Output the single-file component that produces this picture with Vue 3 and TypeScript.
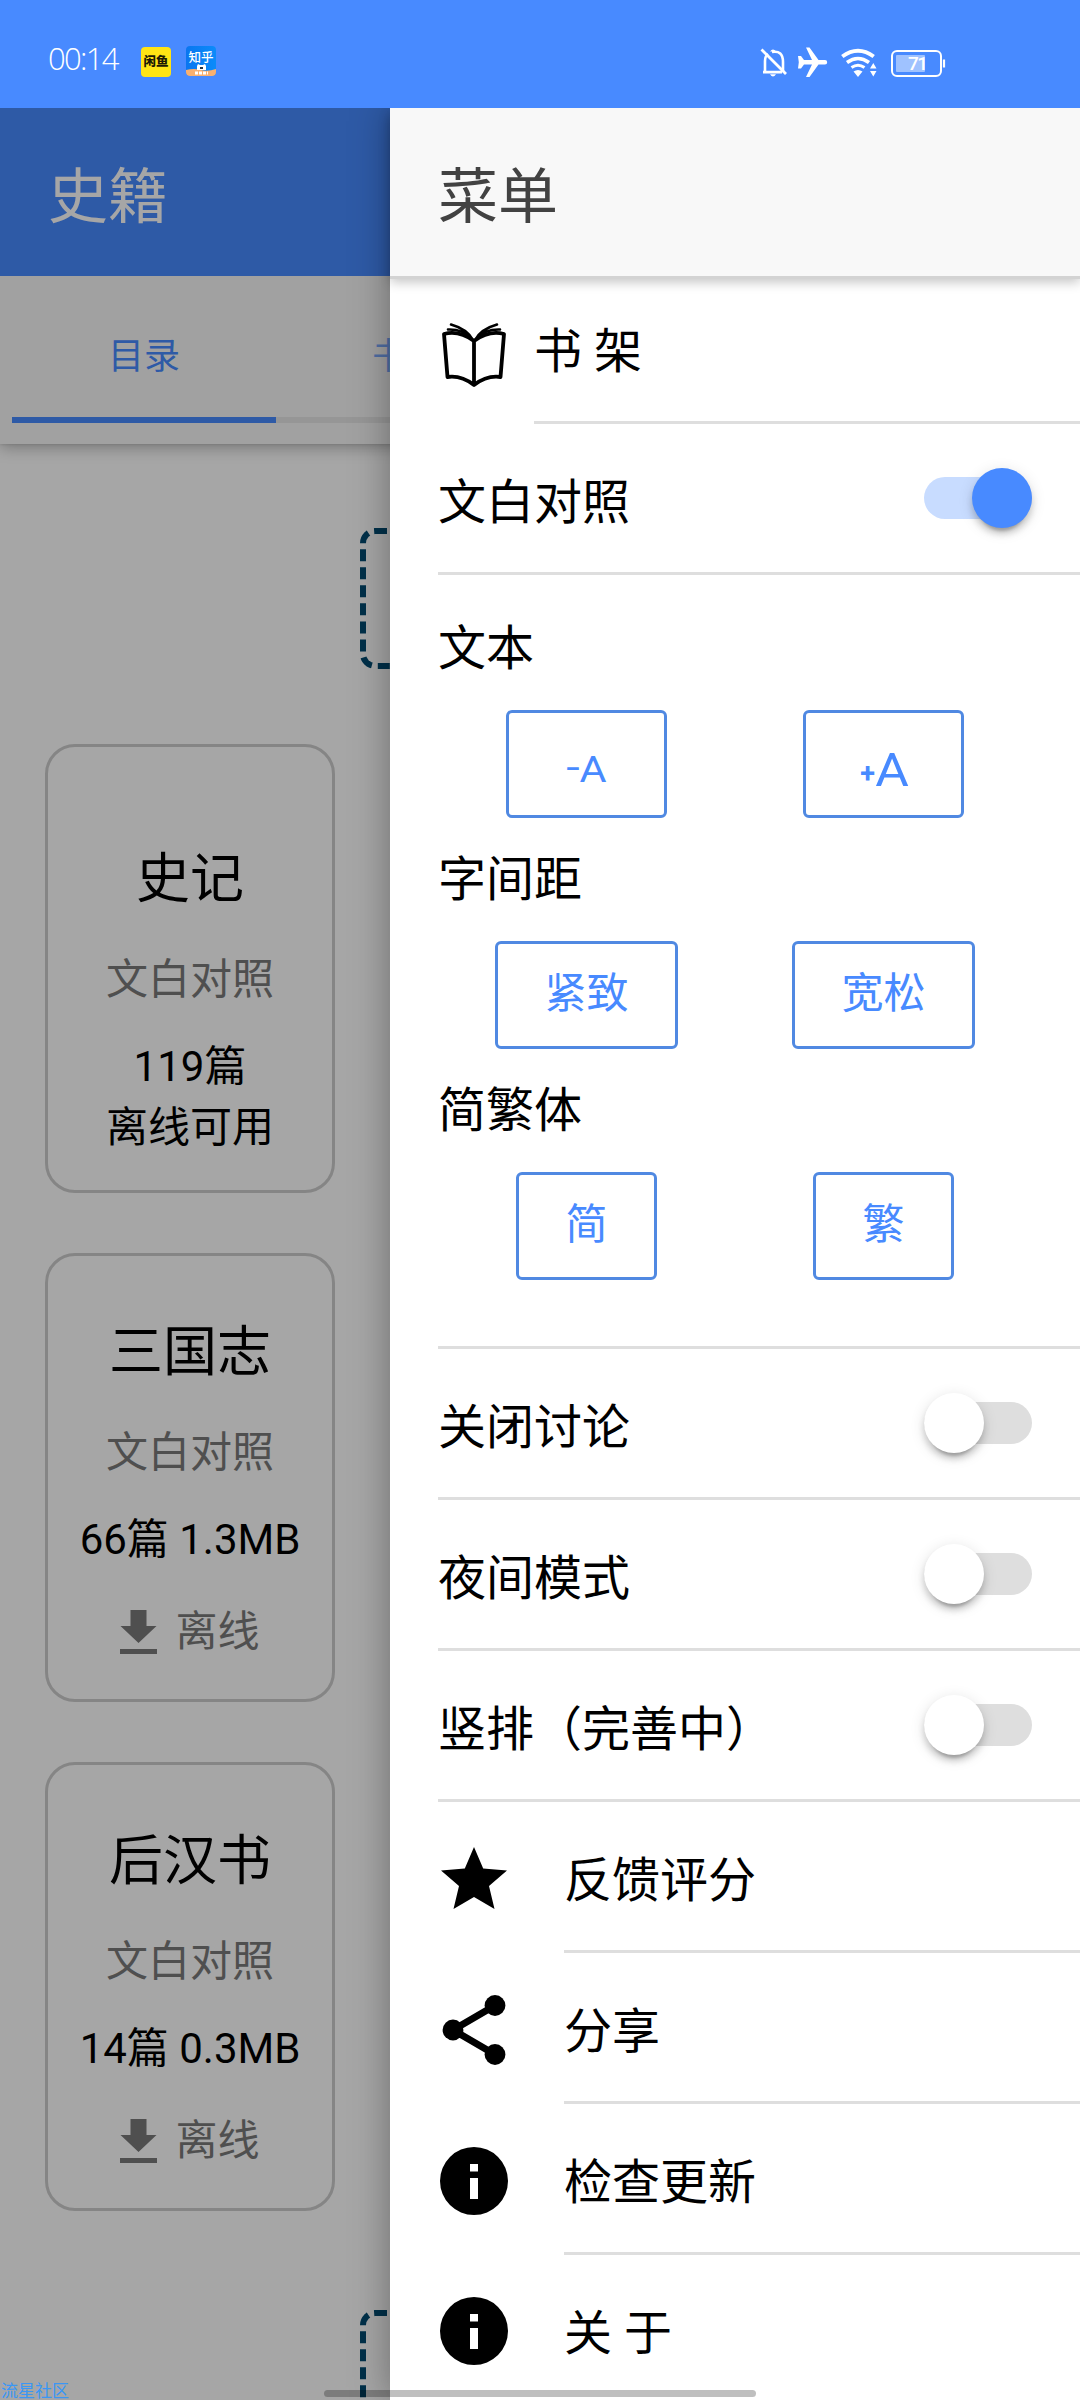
<script setup lang="ts">
import { ref } from 'vue'

interface Book {
  title: string
  info: string
  offline: boolean
}

interface Toggle {
  label: string
  on: boolean
}

interface Choice {
  label: string
  options: string[]
}

interface Link {
  icon: 'star' | 'share' | 'info'
  label: string
}

const books: Book[] = [
  { title: '史记', info: '119篇', offline: true },
  { title: '三国志', info: '66篇 1.3MB', offline: false },
  { title: '后汉书', info: '14篇 0.3MB', offline: false },
]

const compare = ref<Toggle>({ label: '文白对照', on: true })

const choices: Choice[] = [
  { label: '字间距', options: ['紧致', '宽松'] },
  { label: '简繁体', options: ['简', '繁'] },
]

const toggles = ref<Toggle[]>([
  { label: '关闭讨论', on: false },
  { label: '夜间模式', on: false },
  { label: '竖排（完善中）', on: false },
])

const links: Link[] = [
  { icon: 'star', label: '反馈评分' },
  { icon: 'share', label: '分享' },
  { icon: 'info', label: '检查更新' },
  { icon: 'info', label: '关 于' },
]
</script>

<template>
  <div class="screen">
    <header class="status">
      <span class="clock">00:14</span>
      <span class="app xianyu">闲鱼</span>
      <span class="app zhihu">
        <span>知乎</span>
        <svg width="30" height="30" viewBox="0 0 30 30">
          <path d="M0 24q8-2 15 0t15-1v5a2 2 0 0 1-2 2H2a2 2 0 0 1-2-2z" fill="#f9b070" />
          <path d="M11 24v-4l1-2 2 1h3l2-1 1 2v4z" fill="#fff" />
          <path d="M14 21h3v2h-3z" fill="#234" />
          <path d="M9 27h13" stroke="#fff" stroke-width="3" stroke-dasharray="3 1" />
        </svg>
      </span>
      <span class="grow"></span>
      <svg class="sys" width="190" height="36" viewBox="760 44 190 36" fill="none" stroke="#fff">
        <path d="M765 72V61q0-5 3-7m4-2q11-2 11 10v9" stroke-width="2.6" />
        <path d="M763 72.2h19M761.500 49.500l24.500 24.500" stroke-width="2.8" />
        <path d="M770 51.500q3-4 6 0zM770 74.200h6q-3 4.500-6 0z" fill="#fff" stroke="none" />
        <path d="M798 56h3l3 4h8l-6-12.500h3.500L818.500 60h6.500a2.200 2.200 0 0 1 0 4.400h-6.500L809.500 77H806l6-12.600h-8l-3 4h-3l.8-6.200z" fill="#fff" stroke="none" />
        <path d="M842.300 56.500q15.700-11.500 31.400 0" stroke-width="4" />
        <path d="M847 62.500q11-8 22 0" stroke-width="3.600" />
        <path d="M851.500 67.500q6.500-4.600 13 0" stroke-width="3" />
        <path d="M853.500 71.500q4.500-3 9 0l-4.500 5.500z" fill="#fff" stroke="none" />
        <path d="M870 68.500h6.500l-3.200-5.500zM870 71h6.500l-3.200 5.500z" fill="#fff" stroke="none" />
        <rect x="892" y="51" width="49" height="25" rx="5" stroke-width="2" />
        <path d="M944 59.500v8" stroke-width="2.2" />
        <rect x="896" y="55" width="29" height="17" rx="1" fill="#9fc2ff" stroke="none" />
        <text x="908" y="69.500" fill="#fff" stroke="none" font-size="19" letter-spacing="-1.5" font-weight="500">71</text>
      </svg>
    </header>

    <div class="stage">
      <main class="page">
        <div class="bar">史籍</div>
        <nav class="tabs">
          <span class="tab active">目录</span>
          <span class="tab">书架</span>
          <span class="tab"></span>
          <span class="tab"></span>
        </nav>
        <div class="group"></div>
        <div class="books">
          <article v-for="b in books" :key="b.title" class="book" :class="{ saved: b.offline }">
            <h2>{{ b.title }}</h2>
            <p class="kind">文白对照</p>
            <p class="info">{{ b.info }}</p>
            <p v-if="b.offline" class="ready">离线可用</p>
            <p v-else class="fetch">
              <svg width="37" height="44" viewBox="0 0 37 44">
                <path d="M10.500 0h16v16h10L18.500 33 .5 16h10zM0 39h37v5H0z" fill="#7a7a7a" />
              </svg>
              离线
            </p>
          </article>
        </div>
        <div class="group second"></div>
      </main>

      <div class="backdrop"></div>

      <aside class="menu">
        <div class="head">菜单</div>
        <div class="list">
          <div class="row shelf">
            <svg class="ico" width="66" height="66" viewBox="0 0 66 66" fill="none" stroke="#000" stroke-linejoin="round" stroke-linecap="round">
              <path d="M33 19Q18 8 3 12L6.500 55Q20 53 33 63Q46 53 59.500 55L63 12Q48 8 33 19V62" stroke-width="3.800" />
              <path d="M32 18Q26 7 10 2.500M31 17Q22 7 7 7.500M34 18Q40 7 56 2.500M35 17Q44 7 59 7.500" stroke-width="2.600" />
            </svg>
            <div class="cell"><span>书 架</span></div>
          </div>

          <div class="row">
            <div class="cell">
              <span>{{ compare.label }}</span>
              <i class="toggle" :class="{ on: compare.on }" @click="compare.on = !compare.on"></i>
            </div>
          </div>

          <section class="settings">
            <h3>文本</h3>
            <div class="pair">
              <div><button class="size"><small>-</small><b>A</b></button></div>
              <div><button class="size big"><small>+</small><b>A</b></button></div>
            </div>
            <template v-for="c in choices" :key="c.label">
              <h3>{{ c.label }}</h3>
              <div class="pair">
                <div v-for="o in c.options" :key="o"><button>{{ o }}</button></div>
              </div>
            </template>
          </section>

          <div v-for="t in toggles" :key="t.label" class="row">
            <div class="cell">
              <span>{{ t.label }}</span>
              <i class="toggle" :class="{ on: t.on }" @click="t.on = !t.on"></i>
            </div>
          </div>

          <div v-for="l in links" :key="l.label" class="row link">
            <svg class="ico" width="72" height="72" viewBox="0 0 72 72">
              <path v-if="l.icon === 'star'" d="M36 4l9.200 21.500L69 27.500 51 43l5.500 23L36 54 15.500 66 21 43 3 27.500l23.800-2z" />
              <g v-else-if="l.icon === 'share'">
                <path d="M57 11.500L15 36l42 24.500" fill="none" stroke="#000" stroke-width="7" />
                <circle cx="57" cy="11.500" r="10.400" />
                <circle cx="15" cy="36" r="10.400" />
                <circle cx="57" cy="60.500" r="10.400" />
              </g>
              <path v-else fill-rule="evenodd" d="M36 2a34 34 0 1 0 0 68 34 34 0 1 0 0-68zM32 19h8v7.500h-8zM32 33h8v21h-8z" />
            </svg>
            <div class="cell"><span>{{ l.label }}</span></div>
          </div>
        </div>
      </aside>
    </div>

    <div class="watermark">流星社区</div>
    <div class="home"></div>
  </div>
</template>

<style>
body {
  margin: 0;
}
</style>

<style scoped>
.screen {
  position: relative;
  width: 1080px;
  height: 2400px;
  overflow: hidden;
  display: flex;
  flex-direction: column;
  background: #fff;
  color: #000;
  font-family: Roboto, "Noto Sans CJK SC", sans-serif;
}
h2, h3, p {
  margin: 0;
  font-weight: 400;
}
.status {
  box-sizing: border-box;
  height: 108px;
  flex: none;
  display: flex;
  align-items: center;
  padding: 16px 130px 0 48px;
  background: #488aff;
  color: #fff;
}
.clock {
  width: 93px;
  font-family: "Open Sans", sans-serif;
  font-weight: 300;
  font-size: 31px;
  line-height: 36px;
  letter-spacing: -1.7px;
  padding-bottom: 8px;
  box-sizing: border-box;
}
.app {
  width: 30px;
  height: 30px;
  border-radius: 4px;
  display: flex;
  flex-direction: column;
  align-items: center;
  font-weight: 900;
  font-size: 12.5px;
  line-height: 30px;
  overflow: hidden;
}
.xianyu {
  background: #ffe414;
  color: #1c1a05;
}
.zhihu {
  position: relative;
  margin-left: 15px;
  top: -1px;
  background: linear-gradient(90deg, #0a76f0, #0b8bfa);
  font-weight: 500;
  font-size: 12.5px;
  line-height: 23px;
}
.zhihu svg {
  position: absolute;
  inset: 0;
}
.grow {
  flex: 1;
}
.stage {
  position: relative;
  flex: 1;
  overflow: hidden;
}
.bar {
  height: 168px;
  line-height: 179px;
  padding-left: 48px;
  background: #488aff;
  color: #fff;
  font-size: 60px;
}
.tabs {
  box-sizing: border-box;
  height: 168px;
  display: flex;
  padding: 0 12px 21px;
  background: #f8f8f8;
  box-shadow: 0 3px 15px rgba(0, 0, 0, 0.3), 0 0 3px rgba(0, 0, 0, 0.15);
  clip-path: inset(0 0 -40px 0);
}
.tab {
  width: 264px;
  border-bottom: 6px solid #e1e1e1;
  box-sizing: border-box;
  color: #488aff;
  opacity: 0.7;
  font-size: 36px;
  line-height: 162px;
  text-align: center;
}
.tab.active {
  opacity: 1;
  border-color: #488aff;
}
.group {
  box-sizing: border-box;
  width: 360px;
  height: 141px;
  margin: 84px auto 0;
  border: 6px dashed #004b71;
  border-radius: 15px;
}
.group.second {
  margin-top: 99px;
}
.books {
  display: flex;
  flex-direction: column;
  gap: 60px;
  padding: 75px 0 0 45px;
}
.book {
  box-sizing: border-box;
  width: 290px;
  height: 449px;
  border: 3px solid #cdcdcd;
  border-radius: 30px;
  padding-top: 64px;
  text-align: center;
  font-size: 42px;
  line-height: 60px;
}
.book.saved {
  padding-top: 100px;
}
.book h2 {
  font-size: 54px;
  line-height: 66px;
}
.kind {
  margin-top: 37px;
  color: #7a7a7a;
}
.info {
  margin-top: 27px;
  white-space: nowrap;
}
.ready {
  margin-top: 1px;
}
.fetch {
  margin-top: 32px;
  display: flex;
  align-items: center;
  justify-content: center;
  gap: 18px;
  color: #7a7a7a;
}
.backdrop {
  position: absolute;
  inset: 0;
  background: rgba(0, 0, 0, 0.35);
}
.menu {
  position: absolute;
  top: 0;
  bottom: 0;
  left: 390px;
  right: 0;
  background: #fff;
  box-shadow: 0 0 36px rgba(0, 0, 0, 0.35);
}
.head {
  position: relative;
  height: 168px;
  line-height: 179px;
  padding-left: 48px;
  background: #f8f8f8;
  color: #424242;
  font-size: 60px;
  box-shadow: 0 3px 0 #d3d3d3, 0 6px 11px rgba(0, 0, 0, 0.24);
}
.list {
  margin-top: -3px;
  padding-left: 48px;
  font-size: 48px;
}
.row {
  display: flex;
  height: 151px;
}
.ico {
  flex: none;
  margin-top: 41px;
}
.link .ico {
  margin-right: 54px;
}
.link:last-child .ico {
  margin-top: 40px;
}
.shelf .ico {
  margin: 49px 27px 0 3px;
}
.cell {
  flex: 1;
  display: flex;
  align-items: center;
  justify-content: space-between;
  padding-right: 48px;
  border-bottom: 3px solid #dedede;
}
.cell span {
  padding-top: 10px;
  line-height: 60px;
}
.row:last-child .cell {
  border-color: transparent;
}
.toggle {
  position: relative;
  width: 108px;
  height: 42px;
  border-radius: 21px;
  background: #dedede;
}
.toggle::after {
  content: "";
  position: absolute;
  left: 0;
  top: -9px;
  width: 60px;
  height: 60px;
  border-radius: 50%;
  background: #fff;
  box-shadow: 0 6px 6px rgba(0, 0, 0, 0.16), 0 9px 3px -6px rgba(0, 0, 0, 0.2), 0 3px 15px rgba(0, 0, 0, 0.12);
}
.toggle.on {
  background: #c8dcff;
}
.toggle.on::after {
  left: 48px;
  background: #488aff;
}
.settings {
  box-sizing: border-box;
  height: 774px;
  padding-top: 44px;
  border-bottom: 3px solid #dedede;
}
.settings h3 {
  font-size: 48px;
  line-height: 60px;
}
.pair {
  display: flex;
  height: 171px;
}
.pair div {
  width: 297px;
  padding-top: 31px;
  display: flex;
  justify-content: center;
  align-items: flex-start;
}
.pair button {
  box-sizing: border-box;
  height: 108px;
  padding: 0 46.500px 2px;
  border: 3px solid #5089e2;
  border-radius: 6px;
  background: transparent;
  color: #488aff;
  font: 400 42px/100px Roboto, "Noto Sans CJK SC", sans-serif;
}
.pair button.size {
  display: flex;
  width: 161px;
  padding: 0;
  align-items: baseline;
  justify-content: center;
  line-height: 114px;
}
.size b {
  font-weight: 400;
  font-size: 37px;
  transform: scaleX(1.12);
}
.size small {
  font-size: 36px;
  font-weight: 400;
  margin-right: 3px;
  transform: translateY(-2px) scaleX(1.35);
}
.size.big b {
  font-size: 46px;
}
.size.big small {
  font-size: 27px;
  font-weight: 700;
  margin-right: 2px;
  transform: translateY(-3px);
}
.watermark {
  position: absolute;
  left: 1px;
  bottom: 0;
  font-size: 17px;
  line-height: 17px;
  color: #3a97f5;
}
.home {
  position: absolute;
  left: 324px;
  bottom: 3px;
  width: 432px;
  height: 7px;
  border-radius: 4px;
  background: rgba(0, 0, 0, 0.25);
}
</style>
